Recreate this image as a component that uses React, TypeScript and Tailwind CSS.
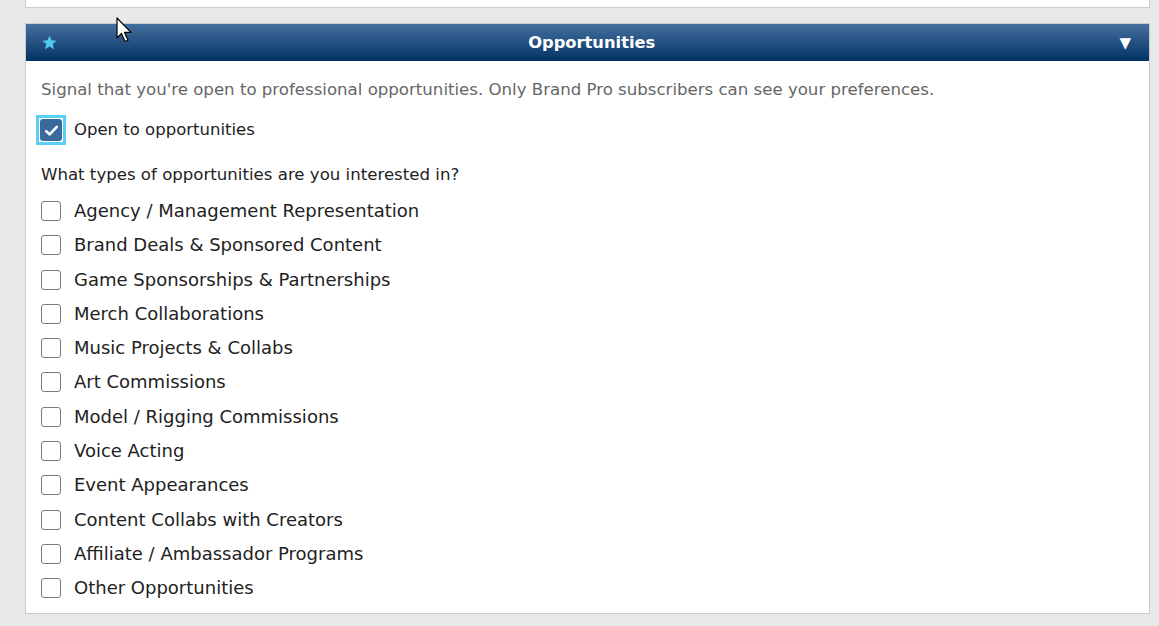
import React from "react";

const items = [
  "Agency / Management Representation",
  "Brand Deals & Sponsored Content",
  "Game Sponsorships & Partnerships",
  "Merch Collaborations",
  "Music Projects & Collabs",
  "Art Commissions",
  "Model / Rigging Commissions",
  "Voice Acting",
  "Event Appearances",
  "Content Collabs with Creators",
  "Affiliate / Ambassador Programs",
  "Other Opportunities",
];

function Box() {
  return <span className="block w-[20px] h-[20px] rounded-[3px] border-[1.5px] border-[#7a7a7a] bg-white shrink-0" />;
}

export default function App() {
  return (
    <div
      className="relative w-[1159px] h-[626px] bg-[#e8e8e8] overflow-hidden text-[#222]"
      style={{ fontFamily: '"DejaVu Sans", Verdana, sans-serif' }}
    >
      <div className="ml-[25px] w-[1125px] h-[8px] bg-white border-x border-b border-[#cccccc]" />
      <div className="ml-[25px] mt-[15px] w-[1125px] bg-white border border-[#cccccc]">
        <div className="h-[37px] flex items-center px-[15px] bg-gradient-to-b from-[#44709e] to-[#003366]">
          <svg width="17" height="17" viewBox="0 0 24 24" className="shrink-0 -mt-[1px]">
            <path d="M12 2l2.9 6.9 7.1.6-5.4 4.7 1.7 7.3L12 17.6 5.7 21.5l1.7-7.3L2 9.5l7.1-.6z" fill="#4fc8f2" />
          </svg>
          <div className="flex-1 text-center text-white font-bold text-[16.3px] leading-[20px] mt-[1px] ml-[6px]">Opportunities</div>
          <span className="text-white text-[15px] mr-[3px] mt-[1px]">▼</span>
        </div>
        <div className="pl-[15px] pt-[19px] pb-[8px]">
          <div className="text-[#666] text-[16.6px] leading-[20px]">
            Signal that you're open to professional opportunities. Only Brand Pro subscribers can see your preferences.
          </div>
          <div className="flex items-center h-[30px] mt-[15px] -ml-[5px]">
            <span className="flex items-center justify-center w-[30px] h-[30px] bg-[#5ad0f5] shrink-0">
              <span className="flex items-center justify-center w-[24px] h-[24px] bg-white">
                <span className="flex items-center justify-center w-[22px] h-[22px] rounded-[3px] bg-[#3a6a9c]">
                  <svg width="17" height="17" viewBox="0 0 16 16">
                    <path d="M3 8.5l3.2 3.2L13 4.5" stroke="white" strokeWidth="2.4" fill="none" strokeLinecap="round" strokeLinejoin="round" />
                  </svg>
                </span>
              </span>
            </span>
            <span className="ml-[8px] text-[16.5px] leading-[20px]">Open to opportunities</span>
          </div>
          <div className="mt-[20px] text-[16.6px] leading-[20px] text-[#222]">
            What types of opportunities are you interested in?
          </div>
          <div className="mt-[9px] flex flex-col">
            {items.map((t) => (
              <div key={t} className="flex items-center h-[34.27px]">
                <Box />
                <span className="ml-[13px] text-[18px] leading-[22px] text-[#222]">{t}</span>
              </div>
            ))}
          </div>
        </div>
      </div>
      <svg className="absolute left-[116px] top-[17px]" width="18" height="27" viewBox="0 0 18 27">
        <path d="M1 1v20l4.5-4.5 3.5 8 3-1.3-3.5-7.8h6.5z" fill="white" stroke="black" strokeWidth="1.2" strokeLinejoin="round" />
      </svg>
    </div>
  );
}
